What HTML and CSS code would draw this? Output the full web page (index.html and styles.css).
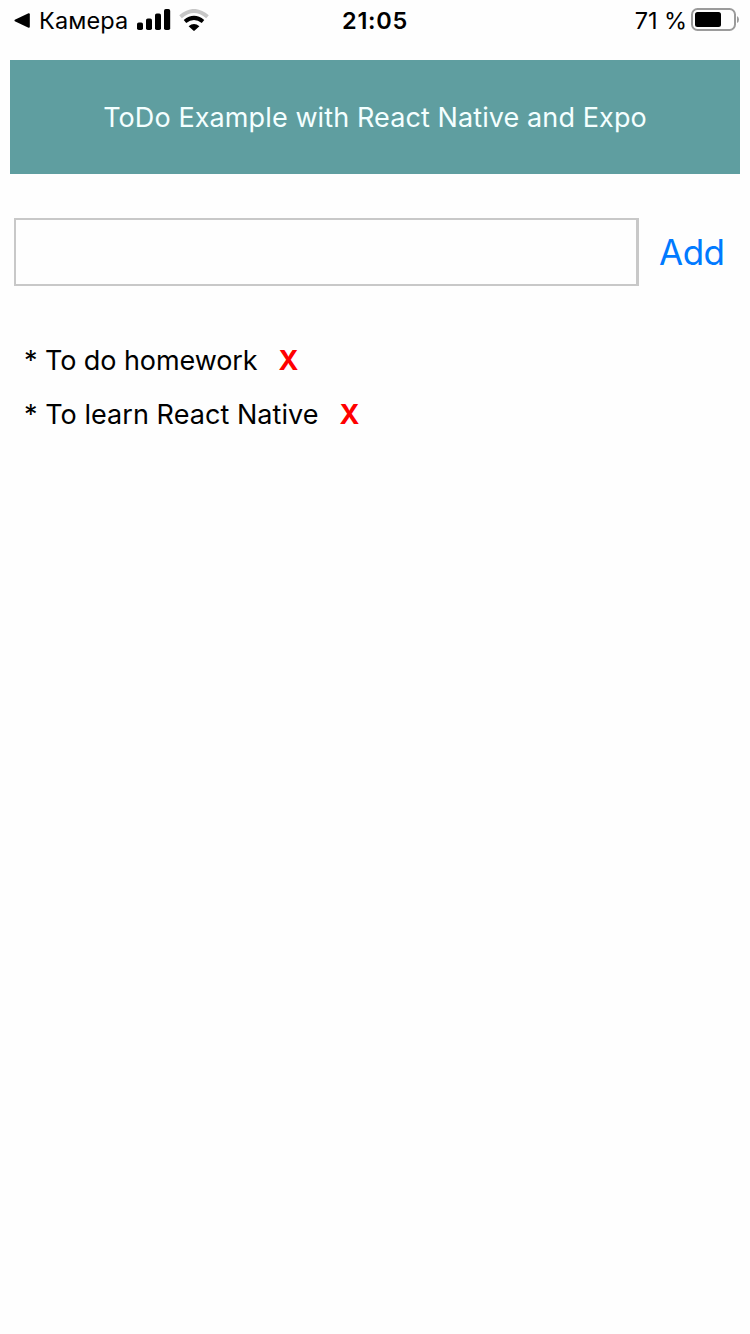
FILE: index.html
```html
<!DOCTYPE html>
<html lang="en">
<head>
<meta charset="utf-8">
<title>ToDo Example</title>
<link rel="stylesheet" href="styles.css">
</head>
<body>
<div class="status">
  <div class="status-left">
    <svg class="back" width="16" height="15" viewBox="0 0 16 15"><path d="M.8 6.700 14.500 .3Q15.800 0 15.800 1.300V13.700Q15.800 15 14.500 14.700L.8 8.300Q0 7.500 .8 6.700Z"/></svg>
    <span class="back-label">Камера</span>
    <svg class="signal" width="34" height="22" viewBox="0 0 34 22"><rect x="0" y="13.500" width="6" height="7.500" rx="1.800"/><rect x="9" y="9.500" width="6" height="11.500" rx="1.800"/><rect x="18" y="4.500" width="6" height="16.500" rx="1.800"/><rect x="27" y="0" width="6.200" height="21" rx="1.800"/></svg>
    <svg class="wifi" width="30" height="23" viewBox="0 0 30 23"><path class="wifi-off" d="M1.500 7.800Q15-3.800 28.500 7.800"/><path class="wifi-on" d="M6 12.500Q15 5.300 24 12.500"/><path d="M9.600 17.200Q15 13 20.400 17.200L15.700 21.600Q15 22.300 14.300 21.600Z"/></svg>
  </div>
  <div class="clock">21:05</div>
  <div class="status-right">
    <span class="charge">71 %</span>
    <svg class="battery" width="49" height="24" viewBox="0 0 49 24"><rect class="shell" x="1" y="1" width="43" height="21" rx="5.500"/><rect x="4" y="4" width="26" height="15" rx="2.500"/><path class="nub" d="M46 8Q48 9 48 11.500T46 15Z"/></svg>
  </div>
</div>
<header class="header"><h1 class="title">ToDo Example with React Native and Expo</h1></header>
<form class="form">
  <input class="field" type="text" aria-label="Task">
  <button class="add" type="button">Add</button>
</form>
<ul class="list">
  <li class="item"><span class="task task-short">* To do homework</span><span class="remove">X</span></li>
  <li class="item"><span class="task">* To learn React Native</span><span class="remove">X</span></li>
</ul>
</body>
</html>
```
FILE: styles.css
```css
* { box-sizing: border-box; }
body {
  margin: 0;
  height: 1334px;
  background: #fefefe;
  color: #000;
  font-family: Inter, "Liberation Sans", sans-serif;
  overflow: hidden;
}
svg { display: block; flex: none; }
.status {
  display: grid;
  grid-template-columns: 1fr auto 1fr;
  height: 40px;
  font-size: 23.5px;
  line-height: 42px;
  white-space: nowrap;
}
.status-left { display: flex; padding-left: 14px; }
.back { margin-top: 13px; }
.back-label { width: 99px; padding-left: 9px; letter-spacing: 0.1px; }
.signal { margin: 9px 0 0 8px; }
.wifi { margin: 9px 0 0 8px; }
.wifi-off, .wifi-on { fill: none; stroke: #000; stroke-width: 4; }
.wifi-off { stroke: #c6c6c6; }
.clock { font-weight: 600; letter-spacing: 0.7px; }
.status-right { display: flex; justify-content: flex-end; padding-right: 10px; }
.charge { margin-right: 4px; letter-spacing: -0.1px; }
.battery { margin-top: 8px; }
.shell { fill: none; stroke: #9b9b9b; stroke-width: 2; }
.nub { fill: #9b9b9b; }
.header {
  display: flex;
  align-items: center;
  justify-content: center;
  height: 114px;
  margin: 20px 10px 0;
  padding-top: 1px;
  background: #5f9ea0;
}
.title {
  margin: 0;
  color: #f4ffff;
  font-size: 27px;
  font-weight: 400;
  line-height: 34px;
  letter-spacing: 0.1px;
  white-space: nowrap;
}
.form { display: flex; margin: 44px 0 0 14px; height: 68px; }
.field {
  width: 625px;
  height: 68px;
  padding: 0 10px;
  border: 2px solid #c8c8c8;
  border-right-width: 3px;
  border-radius: 0;
  background: #fefefe;
  font: inherit;
  font-size: 28px;
  outline: none;
}
.add {
  margin-left: 20px;
  padding: 1px 0 0;
  border: 0;
  background: none;
  color: #007aff;
  font: inherit;
  font-size: 35px;
  line-height: 67px;
  letter-spacing: -0.5px;
}
.list {
  display: grid;
  gap: 20px;
  margin: 58px 0 0 24px;
  padding: 0;
  list-style: none;
}
.item { display: flex; font-size: 27px; line-height: 34px; }
.task { margin-right: 21px; letter-spacing: 0.05px; }
.task-short { letter-spacing: -0.08px; }
.remove { font-weight: 700; color: #f00; }
```
